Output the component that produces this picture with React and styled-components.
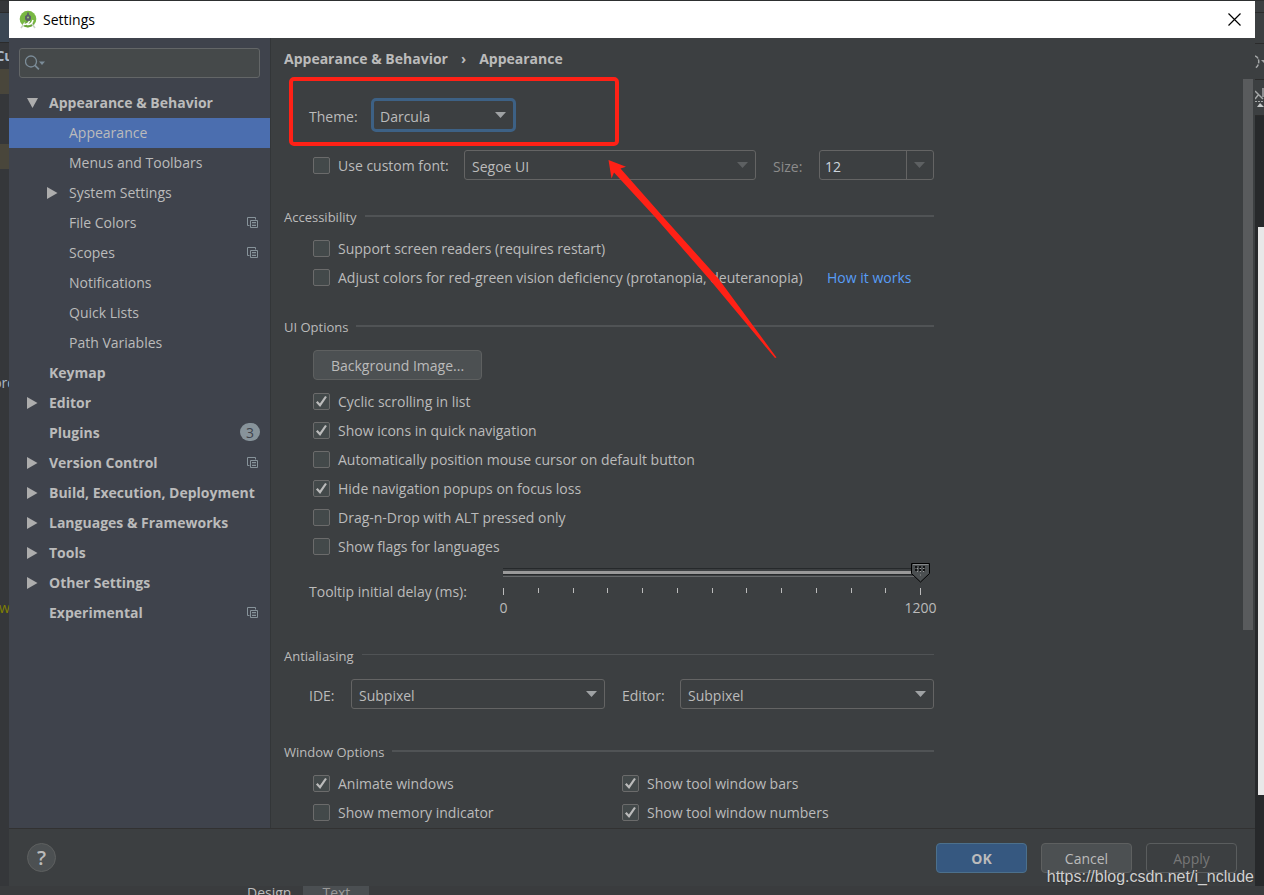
import React, { useState } from 'react';
import styled, { createGlobalStyle, css } from 'styled-components';

const GlobalStyle = createGlobalStyle`
  *, *::before, *::after { box-sizing: border-box; }
  body {
    margin: 0;
    background: #3c3f41;
    color: #bbbbbb;
    font-family: 'Open Sans', 'Noto Sans', sans-serif;
    font-size: 14px;
    line-height: 20px;
  }
  button, input, select { font: inherit; color: inherit; }
`;

/* ---------- desktop and the editor behind the dialog ---------- */

const Desktop = styled.div`
  position: relative;
  display: grid;
  grid-template-columns: 9px minmax(0, 1fr) 9px;
  grid-template-rows: minmax(0, 1fr) 9px;
  height: 100vh;
  min-height: 640px;
  padding-top: 1px;
  overflow: hidden;
  background: #2d2f30;
`;

const Strip = styled.div`
  display: flex;
  flex-direction: column;
  min-height: 0;
  overflow: hidden;
  background: ${(p) => p.$bg};
`;

const Segment = styled.div`
  display: flex;
  flex: none;
  align-items: center;
  justify-content: center;
  height: ${(p) => p.$h}px;
  overflow: hidden;
  background: ${(p) => p.$bg || 'transparent'};
  color: ${(p) => p.$fg || '#a9b7c6'};
  font-weight: ${(p) => (p.$bold ? 700 : 400)};
  border-bottom: ${(p) => (p.$line ? '1px solid #2b2b2b' : '0')};
`;

const Preview = styled.div`
  flex: none;
  height: 568px;
  margin-left: 3px;
  background: #e8e8e8;
`;

const BottomStrip = styled.div`
  grid-column: 1 / -1;
  display: flex;
  align-items: flex-start;
  height: 9px;
  padding-left: 222px;
  overflow: hidden;
  background: #3a3c3e;
`;

const EditorTab = styled.span`
  padding: 0 ${(p) => p.$pad}px;
  margin-left: ${(p) => p.$gap}px;
  line-height: 14px;
  background: ${(p) => (p.$active ? '#4b4f52' : 'transparent')};
  color: ${(p) => (p.$active ? '#999999' : '#bbbbbb')};
`;

/* ---------- dialog frame ---------- */

const Dialog = styled.div`
  display: flex;
  flex-direction: column;
  min-width: 0;
  min-height: 0;
  background: #3c3f41;
`;

const TitleBar = styled.header`
  display: flex;
  flex: none;
  align-items: center;
  gap: 5px;
  height: 37px;
  padding: 0 8px 0 9px;
  background: #ffffff;
  color: #000000;
`;

const Title = styled.h1`
  flex: 1;
  margin: 0;
  font-size: 14px;
  font-weight: 400;
`;

const CloseButton = styled.button`
  display: grid;
  place-items: center;
  width: 26px;
  height: 26px;
  padding: 0;
  border: 0;
  background: none;
`;

const Body = styled.div`
  display: flex;
  flex: 1;
  min-height: 0;
  overflow: hidden;
`;

const Sidebar = styled.nav`
  flex: none;
  width: 262px;
  padding-top: 10px;
  border-right: 1px solid #333638;
  background: #3f434c;
`;

const SearchBox = styled.label`
  display: flex;
  align-items: center;
  gap: 4px;
  height: 30px;
  margin: 0 10px;
  padding: 0 5px;
  border: 1px solid #636667;
  border-radius: 3px;
  background: #45494a;
`;

const SearchInput = styled.input`
  flex: 1;
  min-width: 0;
  padding: 0;
  border: 0;
  outline: 0;
  background: transparent;
`;

const Tree = styled.ul`
  margin: 10px 0 0;
  padding: 0;
  list-style: none;
`;

const TreeRow = styled.a`
  display: flex;
  align-items: center;
  height: 30px;
  padding: 0 10px 0 ${(p) => (p.$level ? 38 : 18)}px;
  background: ${(p) => (p.$selected ? '#4b6eaf' : 'transparent')};
  color: #bbbbbb;
  font-weight: ${(p) => (p.$level ? 400 : 700)};
  text-decoration: none;
  white-space: nowrap;
`;

const ArrowSlot = styled.span`
  display: flex;
  flex: none;
  width: 22px;
`;

const RowText = styled.span`
  flex: 1;
`;

const RowIcon = styled.span`
  display: flex;
  padding: 0 2px 1px 0;
`;

const Badge = styled.span`
  width: 20px;
  height: 18px;
  margin-bottom: 2px;
  border-radius: 9px;
  background: #87939a;
  color: #3f434c;
  font-weight: 400;
  line-height: 19px;
  text-align: center;
`;

/* ---------- settings page ---------- */

const Main = styled.main`
  display: flex;
  flex: 1;
  flex-direction: column;
  min-width: 0;
`;

const Breadcrumb = styled.h2`
  display: flex;
  flex: none;
  gap: 13px;
  height: 39px;
  margin: 0;
  padding-left: 13px;
  font-size: 14px;
  font-weight: 700;
  line-height: 41px;
`;

const ScrollArea = styled.div`
  display: flex;
  flex: 1;
  justify-content: space-between;
  min-height: 0;
  padding-right: 2px;
  overflow: hidden;
`;

const ScrollThumb = styled.div`
  flex: none;
  width: 10px;
  height: calc(74% - 5px);
  margin-top: 2px;
  background: #595b5d;
`;

const Form = styled.form`
  position: relative;
  width: 663px;
  padding: 21px 0 0 13px;
`;

const Row = styled.div`
  display: flex;
  align-items: center;
  margin-top: ${(p) => p.$top || 0}px;
  padding-left: ${(p) => p.$indent}px;
`;

const FieldLabel = styled.label`
  flex: none;
  width: ${(p) => p.$w}px;
  padding-top: 3px;
  color: ${(p) => (p.$dim ? '#8c8c8c' : '#bbbbbb')};
  white-space: nowrap;
`;

const Combo = styled.span`
  display: grid;
  flex: none;
  align-items: center;
  width: ${(p) => p.$w}px;
  margin-right: 17px;
  &:last-child { margin-right: 0; }
  > * { grid-area: 1 / 1; }
`;

const Select = styled.select`
  width: 100%;
  height: 30px;
  padding: 3px 7px 0;
  border: 1px solid #646464;
  border-radius: 3px;
  outline: 0;
  appearance: none;
  background: #3c3f41;
  color: #bbbbbb;
  ${(p) => p.$focused && css`
    height: 34px;
    padding: 3px 6px 0;
    border: 3px solid #3d6185;
    border-radius: 5px;
  `}
  ${(p) => p.$bright && css`
    padding-left: 5px;
    color: #cdd6de;
  `}
`;

const Caret = styled.span`
  display: flex;
  align-items: center;
  justify-content: center;
  justify-self: end;
  width: ${(p) => (p.$focused ? 32 : 28)}px;
  height: ${(p) => (p.$split ? 28 : 20)}px;
  padding-right: ${(p) => (p.$split ? 2 : 0)}px;
  border-left: ${(p) => (p.$split ? '1px solid #646464' : '0')};
  pointer-events: none;
  color: ${(p) => (p.$dim ? '#5d6062' : '#9fa2a4')};
`;

const SectionTitle = styled.h3`
  display: flex;
  align-items: center;
  gap: 8px;
  margin: ${(p) => p.$top}px 0 0;
  font-size: 13px;
  font-weight: 400;
  line-height: 20px;
  &::after {
    content: '';
    flex: 1;
    height: ${(p) => (p.$thin ? 1 : 2)}px;
    margin-bottom: 3px;
    background: #505355;
  }
`;

const CheckGroup = styled.div`
  display: grid;
  grid-template-columns: ${(p) => (p.$double ? '309px 1fr' : '1fr')};
  margin-top: ${(p) => p.$top}px;
  padding-left: 29px;
`;

const CheckLabel = styled.label`
  display: flex;
  flex: none;
  align-items: center;
  gap: 8px;
  width: ${(p) => (p.$w ? `${p.$w}px` : 'auto')};
  height: 29px;
  white-space: nowrap;
`;

const CheckBoxFrame = styled.span`
  display: grid;
  flex: none;
  place-items: center;
  > * { grid-area: 1 / 1; }
  svg { visibility: hidden; pointer-events: none; }
  input:checked + svg { visibility: visible; }
`;

const CheckText = styled.span`
  padding-top: 1px;
`;

const CheckInput = styled.input`
  width: 17px;
  height: 17px;
  margin: 0;
  border: 1px solid #6b6b6b;
  border-radius: 2px;
  appearance: none;
  background: #43494a;
`;

const HelpLink = styled.a`
  color: #589df6;
  text-decoration: none;
`;

const Button = styled.button`
  height: 30px;
  padding: 2px 0 0;
  border: 1px solid #5e6060;
  border-radius: 4px;
  background: #4c5052;
  color: #bbbbbb;
  width: ${(p) => p.$w}px;
  ${(p) => p.$primary && css`
    border-color: #4c708c;
    background: #365880;
    font-weight: 700;
  `}
  &:disabled {
    border-color: #5a5d5e;
    background: #3c3f41;
    color: #777777;
  }
`;

/* ---------- slider ---------- */

const SliderBlock = styled.div`
  flex: 1;
  padding-right: 13px;
`;

const SliderTrack = styled.div`
  position: relative;
  display: flex;
  height: 20px;
  align-items: center;
`;

const Range = styled.input`
  flex: 1;
  min-width: 0;
  height: 20px;
  margin: 0;
  outline: 0;
  appearance: none;
  background: transparent;
  &::-webkit-slider-runnable-track {
    height: 9px;
    background: linear-gradient(
      #26292b 0 1px, #3c3f41 1px 3px, #999999 3px 6px,
      #26292b 6px 7px, #3c3f41 7px 8px, #66696b 8px 9px
    );
  }
  &::-webkit-slider-thumb {
    width: 19px;
    height: 9px;
    appearance: none;
    background: transparent;
  }
`;

const SliderThumb = styled.svg`
  position: absolute;
  top: 0;
  margin-left: -10px;
  pointer-events: none;
`;

const Ticks = styled.div`
  display: flex;
  justify-content: space-between;
  height: 36px;
  padding-top: 6px;
`;

const Tick = styled.span`
  display: flex;
  flex-direction: column;
  align-items: center;
  gap: 3px;
  width: 1px;
  &::before {
    content: '';
    flex: none;
    width: 1px;
    height: ${(p) => (p.$major ? 7 : 5)}px;
    background: #bbbbbb;
  }
`;

/* ---------- footer, marks over the page ---------- */

const Footer = styled.footer`
  display: flex;
  flex: none;
  align-items: center;
  gap: 14px;
  height: 58px;
  padding: 0 18px;
  border-top: 1px solid #323232;
`;

const HelpButton = styled.button`
  width: 29px;
  height: 29px;
  margin-right: auto;
  padding: 0;
  border: 1px solid #5e6060;
  border-radius: 50%;
  background: #4c5052;
  font-size: 20px;
  font-weight: 600;
  line-height: 20px;
`;

const Highlight = styled.div`
  position: absolute;
  top: 0;
  left: 18px;
  width: 330px;
  height: 69px;
  border: 4px solid #ff2116;
  border-radius: 5px;
  pointer-events: none;
`;

const Pointer = styled.svg`
  position: absolute;
  top: 83px;
  left: 337px;
  pointer-events: none;
`;

const Watermark = styled.span`
  position: absolute;
  right: 10px;
  bottom: 8px;
  color: #d0d0d0;
  font-family: 'Liberation Sans', sans-serif;
  font-size: 16px;
  line-height: 20px;
  text-shadow: 0 1px 1px #333333;
  pointer-events: none;
`;

/* ---------- icons ---------- */

const StudioLogo = () => (
  <svg width="20" height="20" viewBox="0 0 20 20" aria-hidden="true">
    <circle cx="10" cy="9" r="8.3" fill="#78b843" />
    <path d="M10 9 L16.5 14 A8.3 8.3 0 0 1 5 16 Z" fill="#68a338" />
    <path d="M9.2 2.500h1.600v3H9.200z" fill="#5b6068" />
    <path d="M10 3.800l3 2.500v3l-1.800 1.700h-2.400L7 9.300v-3z" fill="#5b6068" />
    <circle cx="10" cy="7.500" r="1" fill="#9bc77b" />
    <path d="M7 12.500L3 18M13 12.500L17 18" stroke="#c9d3c4" strokeWidth="1.500" fill="none" />
    <path d="M5 14.500c3.500.5 5-.5 6.500-3.500M9 14.500c3 .5 5-1 6-4.500" stroke="#fff" strokeWidth="1.500" fill="none" />
  </svg>
);

const CloseIcon = () => (
  <svg width="13" height="13" viewBox="0 0 13 13" aria-hidden="true">
    <path d="M.5.5l12 12M12.5.5l-12 12" stroke="#000" strokeWidth="1.2" />
  </svg>
);

const SearchIcon = () => (
  <svg width="20" height="16" viewBox="0 0 20 16" fill="none" aria-hidden="true">
    <circle cx="6" cy="6.5" r="5.500" stroke="#7b8c98" strokeWidth="1.300" />
    <path d="M9.7 10.200l4.200 4.200" stroke="#7b8c98" strokeWidth="1.7" />
    <path d="M14 6.500h6l-3 3.500z" fill="#7b8c98" />
  </svg>
);

const ArrowIcon = ({ open }) => (
  <svg width="11" height="12" viewBox="0 0 11 12" aria-hidden="true">
    <path d={open ? 'M0 1h11L5.5 11z' : 'M0 0v12l10.5-6z'} fill="#adadad" />
  </svg>
);

const CopyIcon = () => (
  <svg width="11" height="11" viewBox="0 0 11 11" fill="none" stroke="#87939a" aria-hidden="true">
    <path d="M2.5 8.5h-2v-8h8v2" />
    <path d="M3.5 3.5h7v7h-7z" />
    <path d="M5 5.500h4M5 8.500h4" />
    <path d="M5 7h4" strokeWidth=".5" />
  </svg>
);

const CaretIcon = () => (
  <svg width="11" height="6" viewBox="0 0 11 6" aria-hidden="true">
    <path d="M0 0h11L5.500 6z" fill="currentColor" />
  </svg>
);

const CheckMark = () => (
  <svg width="13" height="13" viewBox="0 0 13 13" fill="none" aria-hidden="true">
    <path d="M1.800 6.800L5 10.200L11 1.500" stroke="#bbbbbb" strokeWidth="2.200" />
  </svg>
);

const GearEdge = () => (
  <svg width="9" height="16" viewBox="0 0 9 16" fill="none" aria-hidden="true">
    <path d="M0 2c5 1 5 10 0 12" stroke="#a5a7a8" strokeWidth="1.500" strokeDasharray="4 1" />
    <path d="M6 6h3v3z" fill="#a5a7a8" />
  </svg>
);

const InspectEdge = () => (
  <svg width="9" height="20" viewBox="0 0 9 20" aria-hidden="true">
    <path d="M0 3l8 8M0 11l4-5M8 0v9" stroke="#a5a7a8" strokeWidth="1.500" fill="none" />
    <path d="M0 13.500h9" stroke="#a5a7a8" strokeDasharray="2 1" />
    <path d="M2 19l3-4 4 4z" fill="#c5c7c8" />
  </svg>
);

/* ---------- pieces with behaviour ---------- */

const TREE = [
  { text: 'Appearance & Behavior', arrow: 'open' },
  { text: 'Appearance', level: 1, selected: true },
  { text: 'Menus and Toolbars', level: 1 },
  { text: 'System Settings', level: 1, arrow: 'closed' },
  { text: 'File Colors', level: 1, copy: true },
  { text: 'Scopes', level: 1, copy: true },
  { text: 'Notifications', level: 1 },
  { text: 'Quick Lists', level: 1 },
  { text: 'Path Variables', level: 1 },
  { text: 'Keymap' },
  { text: 'Editor', arrow: 'closed' },
  { text: 'Plugins', badge: 3 },
  { text: 'Version Control', arrow: 'closed', copy: true },
  { text: 'Build, Execution, Deployment', arrow: 'closed' },
  { text: 'Languages & Frameworks', arrow: 'closed' },
  { text: 'Tools', arrow: 'closed' },
  { text: 'Other Settings', arrow: 'closed' },
  { text: 'Experimental', copy: true },
];

const UI_OPTIONS = [
  ['Cyclic scrolling in list', true],
  ['Show icons in quick navigation', true],
  ['Automatically position mouse cursor on default button', false],
  ['Hide navigation popups on focus loss', true],
  ['Drag-n-Drop with ALT pressed only', false],
  ['Show flags for languages', false],
];

const WINDOW_OPTIONS = [
  ['Animate windows', true],
  ['Show tool window bars', true],
  ['Show memory indicator', false],
  ['Show tool window numbers', true],
];

const Check = ({ label, checked, width }) => (
  <CheckLabel $w={width}>
    <CheckBoxFrame>
      <CheckInput type="checkbox" defaultChecked={checked} />
      <CheckMark />
    </CheckBoxFrame>
    <CheckText>{label}</CheckText>
  </CheckLabel>
);

const ComboBox = ({ id, value, width, focused, dim, split }) => (
  <Combo $w={width}>
    <Select id={id} defaultValue={value} $focused={focused} $bright={split}>
      <option>{value}</option>
    </Select>
    <Caret $dim={dim} $split={split} $focused={focused}><CaretIcon /></Caret>
  </Combo>
);

const MAX_DELAY = 1200;

const DelaySlider = () => {
  const [delay, setDelay] = useState(MAX_DELAY);
  return (
    <SliderBlock>
      <SliderTrack>
        <Range
          id="delay"
          type="range"
          min="0"
          max={MAX_DELAY}
          value={delay}
          onChange={(e) => setDelay(Number(e.target.value))}
        />
        <SliderThumb
          width="19"
          height="21"
          viewBox="0 0 19 21"
          aria-hidden="true"
          style={{ left: `${(delay / MAX_DELAY) * 100}%` }}
        >
          <path d="M.5 1.500h18v10l-9 8.500l-9-8.500z" fill="#4b4f51" stroke="#000" />
          <path d="M2 2.500h15.500" stroke="#85888a" />
          <path d="M4 5h11M4 8h11" stroke="#000" strokeWidth="1.500" strokeDasharray="2 2" />
          <path d="M6 6.500h9M6 9.500h8" stroke="#999" strokeDasharray="1 2" />
          <path d="M9 13h1" stroke="#999" />
        </SliderThumb>
      </SliderTrack>
      <Ticks>
        {Array.from({ length: 13 }, (_, i) => (
          <Tick key={i} $major={i % 12 === 0}>
            {i === 0 && '0'}
            {i === 12 && MAX_DELAY}
          </Tick>
        ))}
      </Ticks>
    </SliderBlock>
  );
};

const SettingsTree = () => (
  <Tree>
    {TREE.map((item) => (
      <li key={item.text}>
        <TreeRow href="#" $level={item.level} $selected={item.selected}>
          <ArrowSlot>{item.arrow && <ArrowIcon open={item.arrow === 'open'} />}</ArrowSlot>
          <RowText>{item.text}</RowText>
          {item.copy && <RowIcon><CopyIcon /></RowIcon>}
          {item.badge && <Badge>{item.badge}</Badge>}
        </TreeRow>
      </li>
    ))}
  </Tree>
);

const AppearanceForm = () => (
  <Form>
    <Row $indent={25}>
      <FieldLabel htmlFor="theme" $w={62}>Theme:</FieldLabel>
      <ComboBox id="theme" value="Darcula" width={145} focused />
    </Row>
    <Row $indent={29} $top={18}>
      <Check label="Use custom font:" width={151} />
      <ComboBox id="font" value="Segoe UI" width={292} dim />
      <FieldLabel htmlFor="size" $w={46} $dim>Size:</FieldLabel>
      <ComboBox id="size" value="12" width={115} dim split />
    </Row>

    <SectionTitle $top={27}>Accessibility</SectionTitle>
    <CheckGroup $top={7}>
      <Check label="Support screen readers (requires restart)" />
      <Row $indent={0}>
        <Check
          label="Adjust colors for red-green vision deficiency (protanopia, deuteranopia)"
          width={514}
        />
        <HelpLink href="#">How it works</HelpLink>
      </Row>
    </CheckGroup>

    <SectionTitle $top={25}>UI Options</SectionTitle>
    <Row $indent={29} $top={13}>
      <Button type="button" $w={169}>Background Image...</Button>
    </Row>
    <CheckGroup $top={7}>
      {UI_OPTIONS.map(([label, checked]) => (
        <Check key={label} label={label} checked={checked} />
      ))}
    </CheckGroup>
    <Row $indent={25} $top={1}>
      <FieldLabel htmlFor="delay" $w={194}>Tooltip initial delay (ms):</FieldLabel>
      <DelaySlider />
    </Row>

    <SectionTitle $top={28} $thin>Antialiasing</SectionTitle>
    <Row $indent={25} $top={13}>
      <FieldLabel htmlFor="ide" $w={42}>IDE:</FieldLabel>
      <ComboBox id="ide" value="Subpixel" width={254} />
      <FieldLabel htmlFor="editor" $w={58}>Editor:</FieldLabel>
      <ComboBox id="editor" value="Subpixel" width={254} />
    </Row>

    <SectionTitle $top={33}>Window Options</SectionTitle>
    <CheckGroup $top={7} $double>
      {WINDOW_OPTIONS.map(([label, checked]) => (
        <Check key={label} label={label} checked={checked} />
      ))}
    </CheckGroup>

    <Highlight />
    <Pointer width="170" height="200" viewBox="0 0 170 200" aria-hidden="true">
      <path d="M.5 0L18 6.700L12.500 8.500L57 59L110 118L168.500 197.500L167 198L102 120L47 57L6 12.500L3.500 18.500z" fill="#ff2116" />
    </Pointer>
  </Form>
);

export default function App() {
  return (
    <>
      <GlobalStyle />
      <Desktop>
        <Strip $bg="#35373a">
          <Segment $h={12} $line />
          <Segment $h={30} $bg="#3b4754" $line />
          <Segment $h={26} $bold>Cu</Segment>
          <Segment $h={25} $bg="#49463b" />
          <Segment $h={50} />
          <Segment $h={25} $bg="#49463b" />
          <Segment $h={204} />
          <Segment $h={20}>ord</Segment>
          <Segment $h={205} />
          <Segment $h={20} $fg="#808000">w</Segment>
        </Strip>

        <Dialog role="dialog" aria-labelledby="dialog-title">
          <TitleBar>
            <StudioLogo />
            <Title id="dialog-title">Settings</Title>
            <CloseButton type="button" aria-label="Close"><CloseIcon /></CloseButton>
          </TitleBar>
          <Body>
            <Sidebar>
              <SearchBox>
                <SearchIcon />
                <SearchInput type="text" aria-label="Search settings" />
              </SearchBox>
              <SettingsTree />
            </Sidebar>
            <Main>
              <Breadcrumb>
                <span>Appearance &amp; Behavior</span>
                <span>›</span>
                <span>Appearance</span>
              </Breadcrumb>
              <ScrollArea>
                <AppearanceForm />
                <ScrollThumb />
              </ScrollArea>
            </Main>
          </Body>
          <Footer>
            <HelpButton type="button" aria-label="Help">?</HelpButton>
            <Button type="button" $w={91} $primary>OK</Button>
            <Button type="button" $w={91}>Cancel</Button>
            <Button type="button" $w={91} disabled>Apply</Button>
          </Footer>
        </Dialog>

        <Strip $bg="#27292b">
          <Segment $h={12} $bg="#3c3f41" $line />
          <Segment $h={31} $bg="#3c3f41" $line />
          <Segment $h={36} $bg="#3c3f41" $line><GearEdge /></Segment>
          <Segment $h={36} $bg="#3c3f41" $line><InspectEdge /></Segment>
          <Segment $h={111} />
          <Preview />
        </Strip>

        <BottomStrip>
          <EditorTab $pad={12} $gap={13}>Design</EditorTab>
          <EditorTab $pad={19} $gap={0} $active>Text</EditorTab>
        </BottomStrip>
        <Watermark>https://blog.csdn.net/i_nclude</Watermark>
      </Desktop>
    </>
  );
}
